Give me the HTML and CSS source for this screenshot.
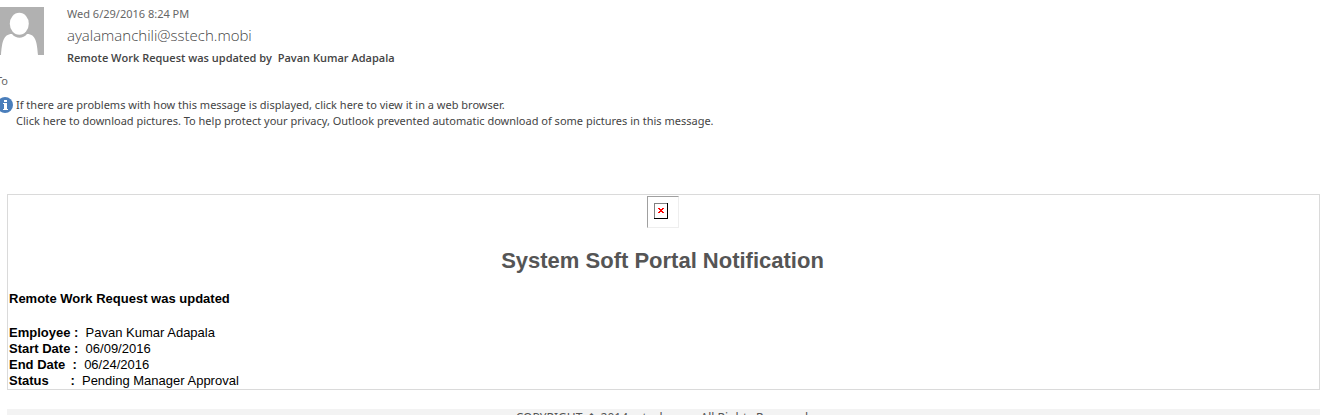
FILE: index.html
```
<!DOCTYPE html>
<html lang="en">
<head>
<meta charset="utf-8">
<title>Remote Work Request was updated</title>
<link rel="stylesheet" href="styles.css">
</head>
<body>
<header class="header">
  <svg class="avatar" viewBox="0 0 44 48" aria-hidden="true">
    <path fill="#b1b1b1" d="M0 0h44v48H0z"/>
    <path fill="#fff" d="M1 48C2 36 3 27 12 27C16 32 23 32 27 27C36 27 37 36 38 48Z"/>
    <ellipse cx="19.300" cy="16.700" rx="10.500" ry="12.200" fill="#b1b1b1"/>
    <ellipse cx="19.300" cy="16.700" rx="9.500" ry="11" fill="#fff"/>
  </svg>
  <div class="meta">
    <time class="date" datetime="2016-06-29T20:24">Wed 6/29/2016 8:24 PM</time>
    <div class="sender">ayalamanchili@sstech.mobi</div>
    <div class="subject">Remote Work Request was updated by&nbsp; Pavan Kumar Adapala</div>
  </div>
</header>
<div class="to">To</div>
<div class="info">
  <svg class="info-icon" viewBox="0 0 16 16" aria-hidden="true">
    <circle cx="8" cy="8" r="8" fill="#4a7ebb"/>
    <path fill="#fff" d="M7 3h3v2H7zM6 6h4v6h1v1H6v-1h1V7H6z"/>
  </svg>
  <div class="info-text">
    <div>If there are problems with how this message is displayed, click here to view it in a web browser.</div>
    <div>Click here to download pictures. To help protect your privacy, Outlook prevented automatic download of some pictures in this message.</div>
  </div>
</div>
<main class="message">
  <div class="picture">
    <svg class="broken" viewBox="0 0 14 16" shape-rendering="crispEdges" aria-hidden="true">
      <path fill="#000" d="M0 0h14v16H0z"/>
      <path fill="#808080" d="M0 0h13v15H0z"/>
      <path fill="#fff" d="M1 1h12v14H1z"/>
      <path fill="#f00" d="M4 5h2v1h2V5h2v1H9v1H8v1h1v1h1v1H8V9H6v1H4V9h1V8h1V7H5V6H4z"/>
    </svg>
  </div>
  <h1 class="title">System Soft Portal Notification</h1>
  <p class="lead">Remote Work Request was updated</p>
  <div class="details">
    <div><b>Employee :</b>&nbsp; Pavan Kumar Adapala</div>
    <div><b>Start Date :</b>&nbsp; 06/09/2016</div>
    <div><b>End Date&nbsp; :</b>&nbsp; 06/24/2016</div>
    <div><b>Status&nbsp; &nbsp; &nbsp; :</b>&nbsp; Pending Manager Approval</div>
  </div>
</main>
<footer class="footer">COPYRIGHT � 2014 sstech.com&nbsp; All Rights Reserved.</footer>
</body>
</html>
```
FILE: styles.css
```
body {
  margin: 0;
  height: 100vh;
  overflow: hidden;
  background: #fff;
  color: #444;
  font: 11px/16px "Noto Sans", "Open Sans", sans-serif;
}
.header {
  display: flex;
  gap: 23px;
  padding-top: 7px;
}
.avatar {
  width: 44px;
  height: 48px;
}
.date {
  display: block;
  line-height: 14px;
  color: #666;
}
.sender {
  font: 300 15px/28px "Open Sans", sans-serif;
  color: #444;
}
.subject {
  font: 600 11px/18px "Open Sans", sans-serif;
}
.to {
  margin: 6px 0 0 -4px;
  color: #666;
}
.info {
  display: flex;
  gap: 3px;
  margin: 8px 0 0 -3px;
}
.info-icon {
  width: 16px;
  height: 16px;
}
.message {
  margin: 65px 18px 0 7px;
  padding: 1px 3px 0 1px;
  border: 1px solid #dadada;
  color: #000;
  font: 13px/16px "Liberation Sans", Arial, sans-serif;
}
.picture {
  display: flex;
  box-sizing: border-box;
  width: 32px;
  height: 32px;
  margin: 0 auto;
  padding: 6px;
  border: 1px solid #eee;
  border-top-color: #a0a0a0;
  border-left-color: #a0a0a0;
}
.broken {
  width: 14px;
  height: 16px;
}
.title {
  margin: 19px 0 16px;
  color: #555;
  font-size: 22px;
  line-height: 28px;
  text-align: center;
}
.lead {
  margin: 0 0 18px;
  font-weight: bold;
}
.footer {
  margin: 19px 18px 0 7px;
  background: #f3f3f3;
  color: #555;
  font-size: 12px;
  line-height: 18px;
  text-align: center;
}
```
